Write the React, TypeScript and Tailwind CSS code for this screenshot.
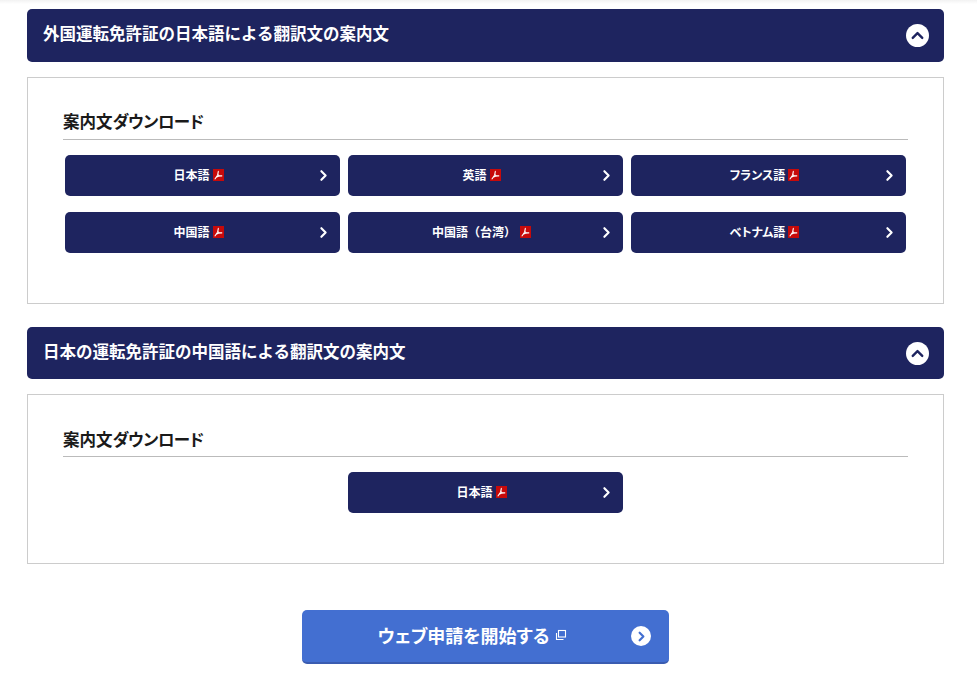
import { ChevronRight, ChevronUp } from "lucide-react";

function PdfIcon() {
  return (
    <svg viewBox="0 0 12 12" preserveAspectRatio="none" className="block h-[12px] w-[11px] shrink-0" aria-hidden="true">
      <rect width="12" height="12" fill="#c70a0a" />
      <path
        d="M5.8 2.2c.1 2.6-1.2 5.2-3.6 7.6M5.4 5.6c.8 1 2.2 1.6 4.6 1.3-2-.2-4.6.2-6.6 1.4"
        fill="none"
        stroke="#fff"
        strokeWidth="1.1"
        strokeLinecap="round"
      />
    </svg>
  );
}

function DownloadButton({ label, gap = "ml-[3px]", kana }: { label: string; gap?: string; kana?: boolean }) {
  return (
    <a className="relative flex h-[41px] w-[275px] items-center justify-center rounded-[5px] bg-[#1e245f] pr-[8px] pb-[2px] text-[12px] font-bold text-white">
      <span className={kana ? "[font-feature-settings:'palt']" : ""}>{label}</span>
      <span className={gap}>
        <PdfIcon />
      </span>
      <ChevronRight className="absolute right-[8px] top-[12px] h-[17px] w-[17px]" strokeWidth={3} />
    </a>
  );
}

function AccordionHeader({ title, tall }: { title: string; tall?: boolean }) {
  return (
    <div
      className={`flex items-center justify-between rounded-[5px] bg-[#1e245f] pl-4 pr-[15px] text-[16.5px] font-bold text-white ${
        tall ? "h-[53px]" : "h-[52px]"
      }`}
    >
      <span className="pb-[4px]">{title}</span>
      <span className="flex h-[23px] w-[23px] items-center justify-center rounded-full bg-white">
        <ChevronUp className="h-[19px] w-[19px] text-[#1e245f]" strokeWidth={3} />
      </span>
    </div>
  );
}

function Panel({ children, raised }: { children: React.ReactNode; raised?: boolean }) {
  return (
    <div className="mt-[15px] border border-[#cccccc] px-[35px] pt-[31px] pb-[50px]">
      <h3
        className={`h-[31px] border-b border-[#bbbbbb] text-[16.5px] font-bold text-[#1a1a1a] ${
          raised ? "leading-[25px]" : "leading-[27px]"
        }`}
      >
        案内文
        <span className="tracking-[-0.5px] [font-feature-settings:'palt']">ダウンロード</span>
      </h3>
      {children}
    </div>
  );
}

export default function App() {
  return (
    <main className="min-h-[699px] bg-white font-['Noto_Sans_CJK_JP','Noto_Sans',sans-serif]">
      <div className="h-[4px] bg-linear-to-b from-[#f2f2f2] to-white" />
      <div className="px-[27px] pt-[5px]">
        <section className="w-[917px]">
          <AccordionHeader title="外国運転免許証の日本語による翻訳文の案内文" tall />
          <Panel raised>
            <div className="mt-[15px] grid grid-cols-[275px_275px_275px] gap-x-[8px] gap-y-[16px] px-[2px]">
              <DownloadButton label="日本語" />
              <DownloadButton label="英語" />
              <DownloadButton label="フランス語" kana />
              <DownloadButton label="中国語" />
              <DownloadButton label="中国語（台湾）" gap="ml-[4px]" />
              <DownloadButton label="ベトナム語" kana />
            </div>
          </Panel>
        </section>
        <section className="mt-[23px] w-[917px]">
          <AccordionHeader title="日本の運転免許証の中国語による翻訳文の案内文" />
          <Panel>
            <div className="mt-[15px] flex justify-center">
              <DownloadButton label="日本語" />
            </div>
          </Panel>
        </section>
        <div className="mt-[46px] flex w-[917px] justify-center">
          <a className="relative flex h-[54px] w-[367px] items-center justify-center rounded-[5px] border-b-2 border-[#3a5cb0] bg-[#436fd1] pr-[26px] pb-[2px] text-[18px] font-bold text-white [font-feature-settings:'palt']">
            <span>ウェブ申請を開始する</span>
            <svg viewBox="0 0 12 12" className="ml-[6px] h-[12px] w-[12px]" fill="none" stroke="#fff" strokeWidth="1.1">
              <rect x="3.5" y="1.5" width="7" height="6.5" />
              <path d="M1.5 4v6.5h7" />
            </svg>
            <span className="absolute right-[18px] top-[16px] flex h-[20px] w-[20px] items-center justify-center rounded-full bg-white">
              <ChevronRight className="h-[15px] w-[15px] text-[#436fd1]" strokeWidth={3.5} />
            </span>
          </a>
        </div>
      </div>
    </main>
  );
}
